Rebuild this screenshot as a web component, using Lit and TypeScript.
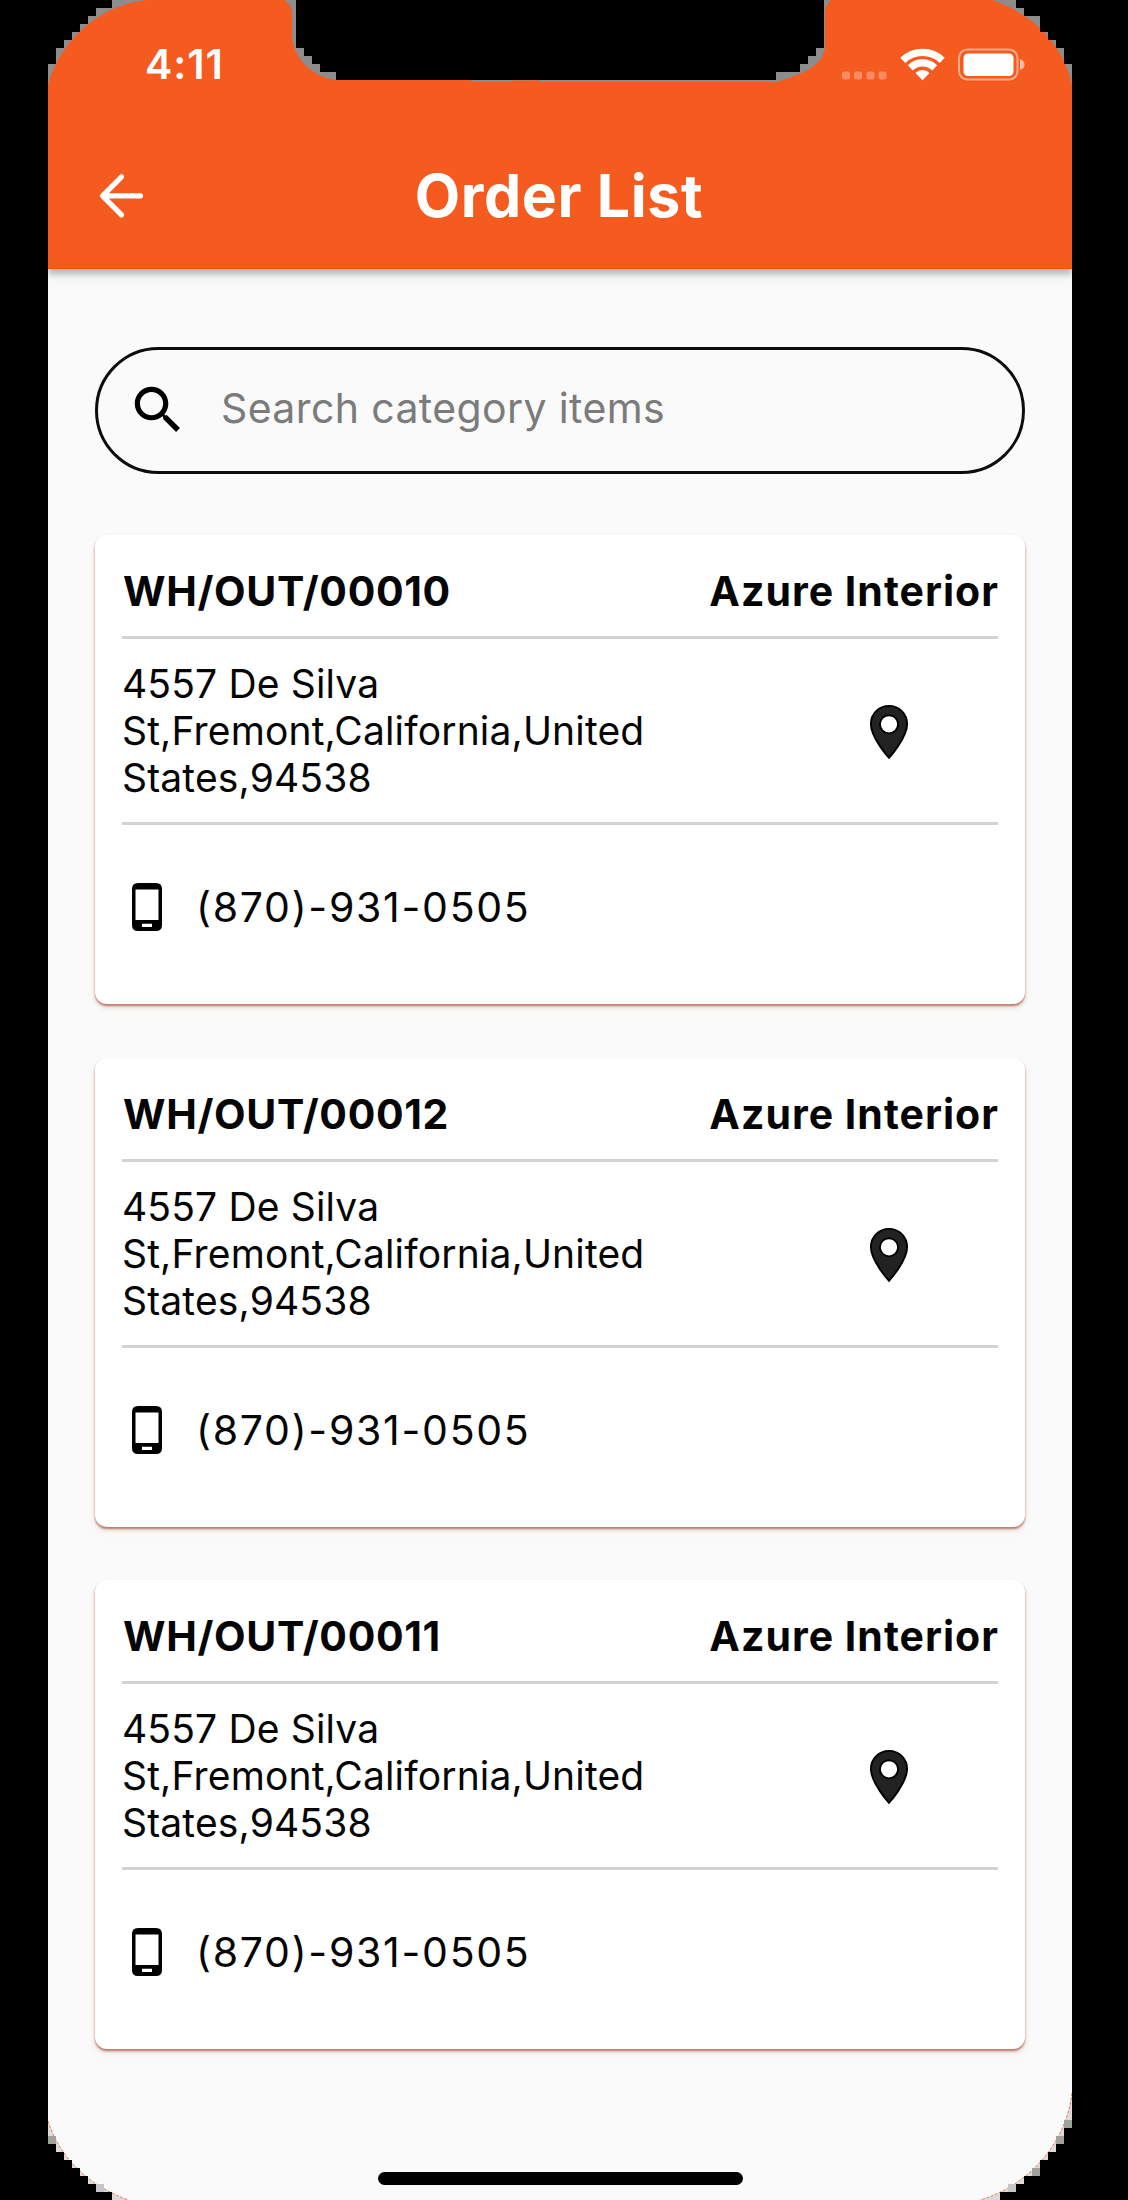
import { LitElement, html, css } from "lit";
import { customElement, property } from "lit/decorators.js";

interface Order {
  code: string;
  customer: string;
  address: string;
  phone: string;
}

const ADDRESS = "4557 De Silva St,Fremont,California,United States,94538";
const PHONE = "(870)-931-0505";
const ORDERS: Order[] = ["00010", "00012", "00011"].map((n) => ({
  code: `WH/OUT/${n}`,
  customer: "Azure Interior",
  address: ADDRESS,
  phone: PHONE,
}));

@customElement("order-card")
class OrderCard extends LitElement {
  static styles = css`
    :host {
      display: block;
      box-sizing: border-box;
      height: 469px;
      padding: 0 27px;
      border-radius: 12px;
      background: #fff;
      color: #050505;
      box-shadow: 0 2px 2px rgba(178, 84, 62, 0.7), 0 3px 4px rgba(90, 60, 50, 0.16),
        0 5px 10px rgba(240, 120, 60, 0.05);
    }
    .head {
      display: flex;
      justify-content: space-between;
      box-sizing: border-box;
      height: 104px;
      padding: 31px 0 0 1px;
      border-bottom: 3px solid #d3d3d3;
      font-size: 41px;
      line-height: 50px;
      font-weight: 700;
      white-space: nowrap;
    }
    .code {
      letter-spacing: 0.64px;
    }
    .customer {
      letter-spacing: 1.02px;
      margin-right: -1px;
    }
    .place {
      display: flex;
      justify-content: space-between;
      box-sizing: border-box;
      height: 186px;
      padding-top: 21px;
      border-bottom: 3px solid #d3d3d3;
    }
    .address {
      width: 560px;
      font-size: 39px;
      line-height: 47px;
      letter-spacing: 0.16px;
    }
    .pin {
      width: 64px;
      height: 64px;
      margin: 40px 77px 0 0;
    }
    .call {
      display: flex;
      align-items: center;
      height: 50px;
      padding: 57px 0 0 9px;
      font-size: 41px;
      line-height: 50px;
      letter-spacing: 1.72px;
    }
    .phone {
      width: 32px;
      height: 48px;
      margin-right: 33px;
    }
  `;

  @property({ attribute: false }) order!: Order;

  render() {
    const o = this.order;
    return html`
      <div class="head">
        <span class="code">${o.code}</span>
        <span class="customer">${o.customer}</span>
      </div>
      <div class="place">
        <div class="address">${o.address}</div>
        <svg class="pin" viewBox="0 0 24 24">
          <path
            fill="#222"
            stroke="#000"
            stroke-width=".7"
            fill-rule="evenodd"
            d="M12 2.2C8.2 2.2 5.2 5.2 5.2 9c0 5.2 6.8 12.7 6.8 12.7S18.8 14.2 18.8 9c0-3.8-3-6.8-6.8-6.8zM12 5.7a3.400 3.400 0 1 1 0 6.800a3.400 3.400 0 1 1 0-6.800z"
          />
        </svg>
      </div>
      <div class="call">
        <svg class="phone" viewBox="0 0 32 48">
          <path
            fill="#000"
            fill-rule="evenodd"
            d="M7 0H25Q31 0 31 6V42Q31 48 25 48H7Q1 48 1 42V6Q1 0 7 0zM4.500 6.500V37H27.500V6.500zM11 40.800V44H21V40.800z"
          />
        </svg>
        <span>${o.phone}</span>
      </div>
    `;
  }
}

@customElement("app-root")
class AppRoot extends LitElement {
  static styles = css`
    :host {
      display: block;
      position: relative;
      width: 1128px;
      height: 2200px;
      overflow: hidden;
      background: #000;
      font-family: Inter, "Liberation Sans", sans-serif;
    }
    .screen {
      display: flex;
      flex-direction: column;
      box-sizing: border-box;
      width: 1024px;
      height: 2200px;
      margin: 0 auto 0 48px;
      padding-bottom: 15px;
      background: #fafafa;
      overflow: hidden;
    }
    .top {
      box-sizing: border-box;
      height: 269px;
      flex: none;
      padding-top: 40px;
      background: #f55a1f;
      color: #fff;
      border-bottom: 1px solid #f9480c;
      box-shadow: 0 5px 6px rgba(20, 40, 50, 0.24), 0 8px 10px rgba(0, 0, 0, 0.08);
    }
    .status {
      display: flex;
      justify-content: space-between;
      height: 50px;
      padding: 0 47px 0 97px;
    }
    .time {
      font-size: 41px;
      line-height: 49px;
      font-weight: 600;
      letter-spacing: 0.9px;
    }
    .indicators {
      width: 184px;
      height: 34px;
      margin-top: 6.5px;
    }
    .nav {
      display: grid;
      grid-template-columns: 120px 1fr 120px;
      align-items: center;
      height: 70px;
      margin-top: 71px;
    }
    .back {
      width: 48px;
      height: 48px;
      margin-left: 49px;
    }
    .title {
      margin: 0 2px 0 0;
      text-align: center;
      font-size: 59px;
      line-height: 70px;
      font-weight: 700;
      letter-spacing: 0.6px;
    }
    .search {
      display: flex;
      align-items: center;
      box-sizing: border-box;
      flex: none;
      width: 930px;
      height: 127px;
      margin: 78px 0 61px 47px;
      padding-left: 29px;
      border: 3px solid #0c0c0c;
      border-radius: 64px;
      color: #7b7b7b;
      font-size: 41px;
      line-height: 50px;
      letter-spacing: 0.38px;
    }
    .lens {
      width: 62px;
      height: 62px;
      margin: -2px 32px 0 0;
    }
    .hint {
      margin-top: -5px;
    }
    .list {
      display: flex;
      flex-direction: column;
      gap: 53.5px;
      padding: 0 47px;
    }
    .home {
      flex: none;
      align-self: center;
      width: 365px;
      height: 13px;
      margin-top: auto;
      border-radius: 7px;
      background: #000;
    }
    .frame {
      position: absolute;
      left: 0;
      top: 0;
      width: 1128px;
      height: 2200px;
      pointer-events: none;
    }
  `;

  render() {
    return html`
      <div class="screen">
        <header class="top">
          <div class="status">
            <span class="time">4:11</span>
            <svg class="indicators" viewBox="0 0 184 34">
              <g fill="#fff" fill-opacity=".3">
                <rect x="1" y="24.5" width="8" height="8" rx="2" />
                <rect x="13" y="24.5" width="8" height="8" rx="2" />
                <rect x="25.5" y="24.5" width="8" height="8" rx="2" />
                <rect x="37.5" y="24.5" width="8" height="8" rx="2" />
              </g>
              <g fill="none" stroke="#fff" stroke-width="7.2">
                <path d="M61.8 13.3A28.5 28.5 0 0 1 101.2 13.3" />
                <path d="M69.3 20.8A17.8 17.8 0 0 1 93.7 20.8" />
              </g>
              <path fill="#fff" d="M74.5 26A9.8 9.8 0 0 1 88.5 26L81.5 33.2z" />
              <rect x="118" y="2.5" width="58.5" height="30" rx="8.5" fill="none" stroke="#fff" stroke-opacity=".5" stroke-width="2" />
              <rect x="122.500" y="6.500" width="50" height="22.500" rx="4.500" fill="#fff" />
              <path fill="#fff" fill-opacity=".6" d="M179 12q4.500 1.500 4.500 5.500t-4.500 5.500z" />
            </svg>
          </div>
          <div class="nav">
            <svg class="back" viewBox="0 0 48 48">
              <path d="M43.500 23.800H6.500M24.500 4.800L5.500 23.800L24.500 42.800" fill="none" stroke="#fff" stroke-width="5.200" stroke-linecap="round" stroke-linejoin="round" />
            </svg>
            <h1 class="title">Order List</h1>
          </div>
        </header>

        <div class="search">
          <svg class="lens" viewBox="0 0 24 24">
            <path
              fill="#000"
              d="M15.5 14h-.79l-.28-.27C15.41 12.59 16 11.11 16 9.5 16 5.91 13.09 3 9.5 3S3 5.91 3 9.5 5.91 16 9.5 16c1.61 0 3.09-.59 4.23-1.57l.27.28v.79l5 4.99L20.49 19l-4.99-5zm-6 0C7.01 14 5 11.99 5 9.5S7.01 5 9.5 5 14 7.01 14 9.5 11.99 14 9.5 14z"
            />
          </svg>
          <span class="hint">Search category items</span>
        </div>

        <div class="list">${ORDERS.map((o) => html`<order-card .order=${o}></order-card>`)}</div>
        <div class="home"></div>
      </div>

      <svg class="frame" viewBox="0 0 1128 2200">
        <g fill="#8d8d8d">
          <path d="M48 0V85C58 48 92 6 147 0z" />
          <path d="M1072 0V85C1064 46 1034 14 992 0z" />
          <path d="M284 0Q292 4 292 14V36C293 58 312 77 336 80H471V81.5H512V80.5H540V82H776C800 75 825 66 825 46V14Q825 5 831 0z" />
        </g>
        <g fill="#dcdada">
          <path d="M48 2121C60 2158 88 2185 128 2200H48z" />
          <path d="M1072 2093C1066 2144 1028 2186 980 2200H1072z" />
        </g>
        <g fill="none" stroke="#ee7a5c" stroke-width="1" stroke-dasharray="3 1.5">
          <path d="M48 2121C60 2158 88 2185 128 2200" />
          <path d="M1072 2093C1066 2144 1028 2186 980 2200" />
        </g>
        <path fill="#9da199" d="M48 2136h8v8h-8zM1064 2120h8v8h-8zM1032 2168h8v8h-8zM1056 2136h8v8h-8z" />
        <path fill="#c4c6c8" d="M96 2184h8v8h-8zM1008 2184h8v8h-8z" />
        <g fill="#000">
          <path d="M0 0H112V8H96V16H88V24H80V32H72V40H64V48H56V64H48V2144H56V2152H64V2160H72V2168H80V2176H88V2184H96V2192H112V2200H0z" />
          <path d="M1128 0H1016V8H1024V16H1040V32H1048V40H1056V48H1064V64H1072V2128H1064V2144H1056V2152H1048V2160H1040V2176H1024V2184H1016V2192H1000V2200H1128z" />
          <path d="M296 0V48H304V56H312V64H320V72H336V80H776V72H800V64H808V56H816V48H824V0z" />
        </g>
      </svg>
    `;
  }
}
